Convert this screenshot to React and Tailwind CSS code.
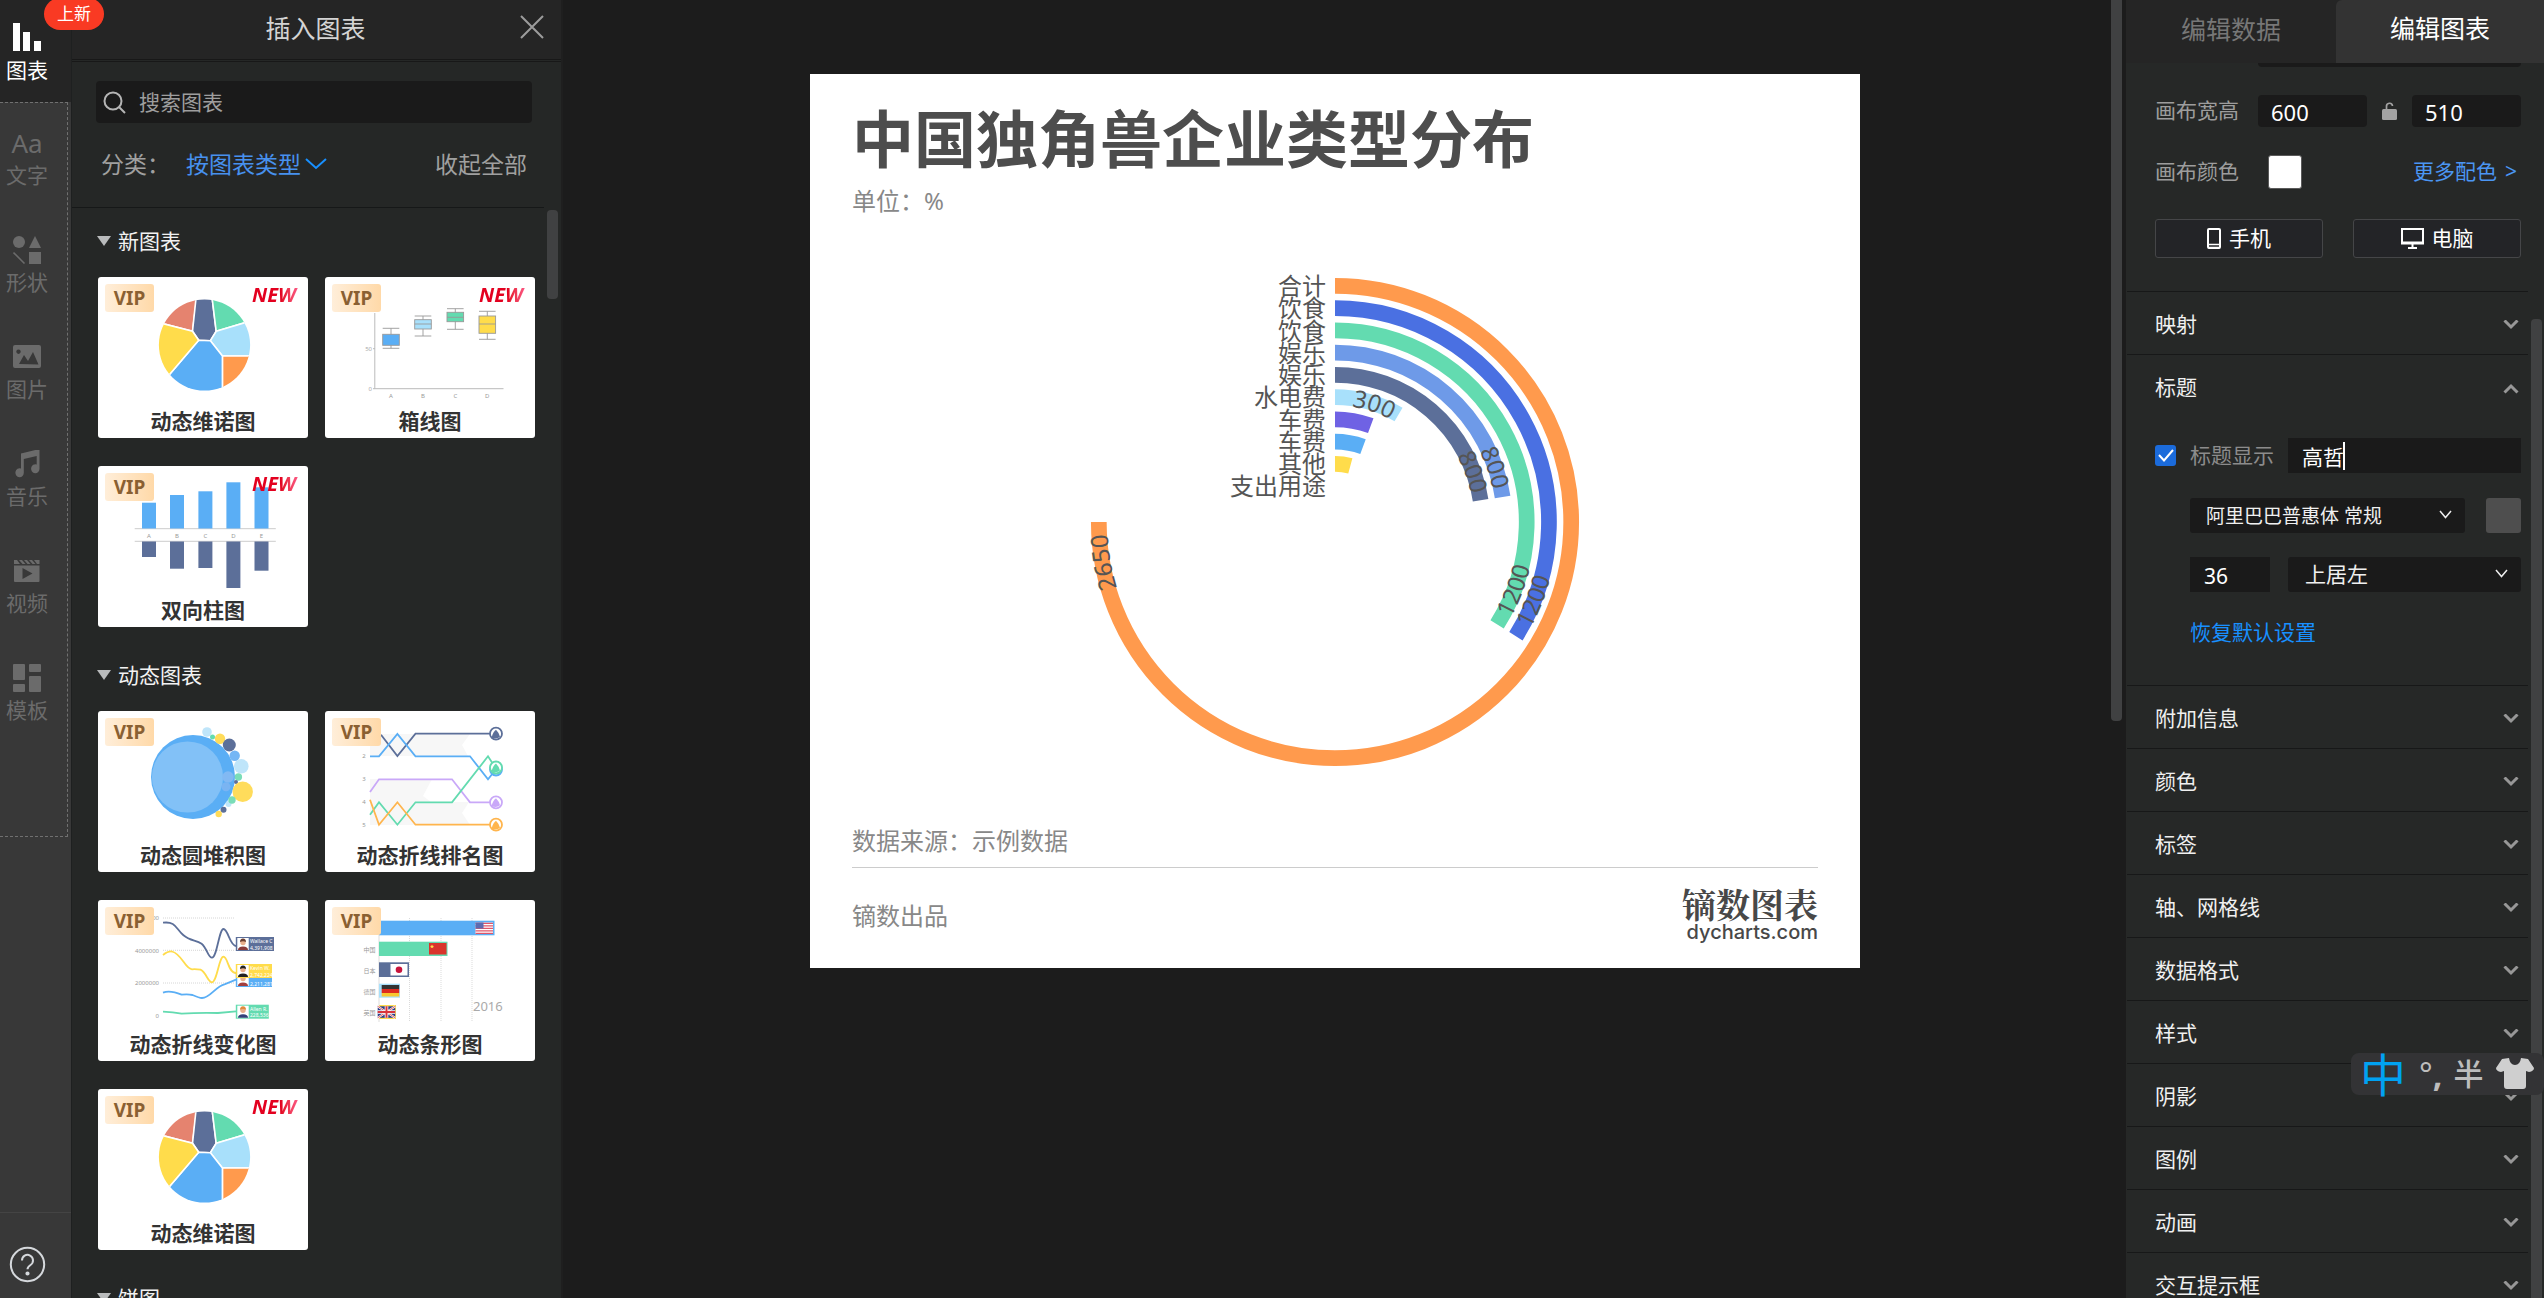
import React from 'react';

const RAIL = ['文字', '形状', '图片', '音乐', '视频', '模板'];

function RailIcon({ name }) {
  const p = { width: 28, height: 28, viewBox: '0 0 28 28', fill: 'currentColor', 'aria-hidden': true };
  switch (name) {
    case '图表':
      return (
        <svg {...p}>
          <rect x="0" y="0" width="7" height="28" />
          <rect x="10" y="9" width="7" height="19" />
          <rect x="21" y="18" width="7" height="10" />
        </svg>
      );
    case '形状':
      return (
        <svg {...p}>
          <circle cx="6" cy="6" r="6" />
          <path d="M22 0l6 12H16z" />
          <path d="M0.5 16.5l11 11" stroke="currentColor" strokeWidth="1.6" />
          <rect x="16" y="16" width="12" height="12" />
        </svg>
      );
    case '图片':
      return (
        <svg {...p}>
          <path
            fillRule="evenodd"
            d="M2 2h24a2 2 0 0 1 2 2v19a2 2 0 0 1-2 2H2a2 2 0 0 1-2-2V4a2 2 0 0 1 2-2zM5.500 6.500a2.200 2.200 0 1 0 .01 0zM6 21l5-9 4 6 5-9 5.500 12.500z"
          />
        </svg>
      );
    case '音乐':
      return (
        <svg {...p}>
          <path d="M8 3.500L26.500 -1v19.500a4.200 4.500 0 1 1-2.800-4V6L10.800 9v13.500a4.200 4.500 0 1 1-2.800-4z" />
        </svg>
      );
    case '视频':
      return (
        <svg {...p}>
          <path d="M1 3h3l3 4H1zM6 3h3l3.500 4h-3zM11 3h3l3.500 4h-3zM16 3h3l3.500 4h-3zM21 3h5.500v4H24z" />
          <path fillRule="evenodd" d="M1 8.500h25.500V24a1 1 0 0 1-1 1H2a1 1 0 0 1-1-1zM9.500 11v11l10-5.500z" />
        </svg>
      );
    case '模板':
      return (
        <svg {...p}>
          <rect x="0" y="0" width="12" height="16" rx="1" />
          <rect x="16" y="0" width="12" height="8" rx="1" />
          <rect x="0" y="20" width="12" height="8" rx="1" />
          <rect x="16" y="12" width="12" height="16" rx="1" />
        </svg>
      );
    default:
      return null;
  }
}

function Rail() {
  return (
    <nav className="relative flex w-[71px] shrink-0 flex-col bg-[#383838]">
      <button className="flex h-[102px] shrink-0 flex-col items-center gap-[6px] bg-[#252525] pt-[23px] pr-[17px] text-[21px] leading-[26px] text-white">
        <RailIcon name="图表" />
        <span>图表</span>
      </button>
      <div className="flex h-[735px] w-[68px] shrink-0 flex-col gap-12 border-y border-r border-dashed border-[#707070] pt-[26px] pr-[13px] text-[#6b6b6b]">
        {RAIL.map((n) => (
          <button key={n} className="flex flex-col items-center gap-[5px] text-[21px] leading-[26px]">
            {n === '文字' ? <span className="h-7 text-[26px] leading-7">Aa</span> : <RailIcon name={n} />}
            <span>{n}</span>
          </button>
        ))}
      </div>
      <div className="mt-auto flex h-[86px] shrink-0 items-center border-t border-[#444] pt-[18px] pl-[9px]">
        <button aria-label="帮助" className="text-[#d5d8dc]">
          <svg width="37" height="37" viewBox="0 0 37 37" fill="none" stroke="currentColor" strokeWidth="2">
            <circle cx="18.500" cy="18.500" r="16.700" />
            <path d="M13 14.500a5.500 5.500 0 1 1 8.500 4.500c-2 1.300-3 2-3 4.300" />
            <circle cx="18.500" cy="27.500" r="1.100" fill="currentColor" />
          </svg>
        </button>
      </div>
      <span className="absolute top-[-2px] left-[44px] z-10 flex h-8 w-[60px] items-center justify-center rounded-full bg-[#f93a23] text-[17px] text-white">
        上新
      </span>
    </nav>
  );
}

function Voronoi({ id }) {
  const cells = [
    ['#e5836f', '58,42.8 50,10 99,15 98.5,20.7 94.5,52.3'],
    ['#5c6f99', '99,10 113,10 118.2,52.3 112.4,61.7 100.7,61.3 94.500,52.3'],
    ['#63dbb0', '113,10 160,10 154,41.5 118.2,52.3'],
    ['#a8e0fb', '118.2,52.3 154,41.5 165,77 124.4,77 112.4,61.7'],
    ['#ff9a4d', '124.4,77 165,77 160,120 124.4,120'],
    ['#5aaef5', '112.4,61.7 124.4,77 124.4,125 60,125 60,109 100.7,61.3'],
    ['#ffdc4b', '94.5,52.3 100.7,61.3 60,109 45,90 45,39.500'],
  ];
  return (
    <>
      <clipPath id={id}>
        <circle cx="106.5" cy="66" r="45.6" />
      </clipPath>
      <g clipPath={`url(#${id})`} stroke="#fff" strokeWidth="1.6">
        {cells.map(([c, pts]) => (
          <polygon key={c} fill={c} points={pts} />
        ))}
      </g>
    </>
  );
}

function BoxPlot() {
  const boxes = [
    ['#5aaef5', 66, 49.3, 55.3, 61, 66.3, 69.3, 'A'],
    ['#a8e0fb', 98, 37, 40.7, 45, 50, 57, 'B'],
    ['#63dbb0', 130.3, 29.7, 33.3, 38.3, 42.7, 50.3, 'C'],
    ['#ffdc4b', 162.300, 32.3, 37, 45, 54.3, 60.3, 'D'],
  ];
  return (
    <>
      <path d="M49.8 34V109.7H178.5M48 69.7h2M48 109.7h2" stroke="#bbb" strokeWidth="1" fill="none" />
      <g fontSize="6" fill="#aaa" textAnchor="end">
        <text x="47" y="72">50</text>
        <text x="47" y="112">0</text>
      </g>
      {boxes.map(([c, x, t, q1, m, q3, b, l]) => (
        <g key={l} stroke="#999" strokeWidth="0.9">
          <path d={`M${x} ${t}V${b}M${x - 8.3} ${t}h16.6M${x - 8.3} ${b}h16.6`} />
          <rect x={x - 8.3} y={q1} width="16.6" height={q3 - q1} fill={c} />
          {l !== 'A' && <path d={`M${x - 8.3} ${m}h16.6`} />}
          <text x={x} y="119" fontSize="6" fill="#999" stroke="none" textAnchor="middle">{l}</text>
        </g>
      ))}
    </>
  );
}

function TwoWayBars() {
  const d = [
    ['A', 44, 34.7, 89],
    ['B', 72, 27, 100.7],
    ['C', 100.4, 23.3, 100],
    ['D', 128.4, 14.3, 120],
    ['E', 156.5, 19.3, 102.7],
  ];
  return (
    <>
      <path d="M36.7 60.7H177.8M36.7 73.3H177.8" stroke="#ccc" />
      {d.map(([l, x, t, b]) => (
        <g key={l}>
          <rect x={x} y={t} width="14" height={60.500 - t} fill="#5aaef5" />
          <rect x={x} y="73.500" width="14" height={b - 73.500} fill="#5c6f99" />
          <text x={x + 7} y="69.500" fontSize="6" fill="#999" textAnchor="middle">{l}</text>
        </g>
      ))}
    </>
  );
}

function Bubbles() {
  const d = [
    [95, 64, 42, '#5aaef5'], [89.5, 64, 35.6, '#82c1f7'], [109, 19, 4.8, '#bfe5fa'], [114.5, 24, 2.5, '#63dbb0'],
    [122, 25.7, 5.2, '#ffdc5b'], [131.3, 32, 6.5, '#5c6f99'], [136.7, 42.7, 5.2, '#74b6f5'], [143.3, 53.3, 7.3, '#bfe5fa'],
    [140.4, 64, 3.7, '#7addb8'], [138, 69, 2, '#5c6f99'], [130, 64, 5.8, '#82b9f3'], [128, 73.7, 4.5, '#7ab4f2'],
    [144.7, 78.7, 10.2, '#ffdc5b'], [130.500, 91, 3, '#bfe5fa'], [134, 87, 3.7, '#7addb8'], [125.5, 96.7, 3, '#5c6f99'],
    [120.7, 101, 3.2, '#ffdc5b'],
  ];
  return d.map(([x, y, r, c], i) => <circle key={i} cx={x} cy={y} r={r} fill={c} />);
}

function RankLines() {
  const lines = [
    ['#5c6f99', '56,21.7 72.4,43 90.5,20.7 165,20.7', 20.7],
    ['#5aaef5', '45,43.3 54,43.3 72.4,21 90.5,43.3 145,43.3 163,66.3 168,60', 56.5],
    ['#c9a8f8', '45,79 54,66.3 127,66.3 145,89.3 165,89.3', 89.3],
    ['#63dbb0', '45,101.7 54,89.3 72.4,111.7 90.5,89.3 127,89.3 163,43.3 168,51', 54.500],
    ['#ffb54d', '45,86.7 54,111.7 72.4,89.3 90.5,111.7 165,111.7', 111.7],
  ];
  return (
    <>
      <path d="M45 21h100l-8 11 6 11H45zM45 66h62l-9 17 8 6h38l-7 11 8 12H45z" fill="#f7f7f7" />
      {[2, 3, 4, 5].map((n) => (
        <text key={n} x="39" y={n * 22.800 - 0.5} fontSize="6" fill="#999" textAnchor="middle">{n}</text>
      ))}
      {lines.map(([c, pts, y]) => (
        <g key={c} stroke={c} strokeWidth="1.8" fill="none">
          <polyline points={pts} />
          <circle cx="171" cy={y} r="6" fill="#fff" />
          <path d={`M166.500 ${y + 4}q1.500-6 4.500-8q3 3 4 7q-3 3-8.500 1z`} fill={c} stroke="none" />
        </g>
      ))}
    </>
  );
}

function Tag({ y, w, h, color, name, value, shirt, hair }) {
  return (
    <g>
      <rect x="137.8" y={y} width={w} height={h} fill={color} />
      <rect x="139.3" y={y + 1} width="11.4" height={h - 2} fill="#fff" />
      <path d={`M140 ${y + h - 1}q0-3.500 5-3.500t5 3.500z`} fill={shirt} />
      <circle cx="145" cy={y + 5.500} r="2.700" fill="#e9b08d" />
      <path d={`M142 ${y + 5}q0-3.500 3-3.500t3 3.500q-3-1.500-6 0z`} fill={hair} />
      <text x="152" y={y + 6} fontSize="5" fill="#fff">{name}</text>
      <text x="152" y={y + h - 1.500} fontSize="5" fill="#fff">{value}</text>
    </g>
  );
}

function TrendLines() {
  return (
    <>
      <path d="M65 16H137M65 48.3H137M65 81H137" stroke="#ccc" strokeDasharray="1 1" strokeWidth="0.8" />
      <g fontSize="6" fill="#999" textAnchor="end">
        <text x="61" y="18">00</text>
        <text x="61" y="50.500">4000000</text>
        <text x="61" y="83">2000000</text>
        <text x="61" y="116">0</text>
      </g>
      <g fill="none" strokeWidth="1.8">
        <path stroke="#5c6f99" d="M65 20.700C78 19 78 27 85.500 33.300C92 39 98 38 103.600 41.700C109 46 110 55.700 114 55.700C119 55.700 121 27 125.500 27C130 27 132 44 138 44" />
        <path stroke="#ffdc4b" d="M65 53Q70 49 74 49.500C84 52 87 67 94 67.300Q98 67 102.500 67.700C108 70 110 80.300 114 80.300C119 80 121 54.700 125.500 54.700C130 55 130 71 138 71" />
        <path stroke="#5aaef5" d="M65 90.700Q72 88 83.600 92.700Q90 92 94.500 93C99 95 102 96 104 96C112 96 118 84 126.500 82.300L138 77.700" />
        <path stroke="#63dbb0" d="M65 109.700Q75 110 83.600 111.700Q100 110.500 120 111L138 109.300" />
      </g>
      <Tag y={35} w={38.2} h={14} color="#5c6f99" name="Wallace C" value="4,391,908" shirt="#8a3b3b" hair="#6b3d2e" />
      <Tag y={71} w={36.2} h={14} color="#5aaef5" name="" value="2,211,281" shirt="#a33f3f" hair="#7b3d2e" />
      <Tag y={62} w={36.2} h={14} color="#ffdc4b" name="Kevin W." value="2,742,224" shirt="#222" hair="#222" />
      <Tag y={102.7} w={33} h={14} color="#63dbb0" name="Allen R." value="228,536" shirt="#33407a" hair="#e08a3c" />
    </>
  );
}

function FlagBars() {
  return (
    <>
      <path d="M84.5 16V120M116 16V120M147 16V120" stroke="#ccc" strokeDasharray="1 1" strokeWidth="0.7" />
      <path d="M54 16V120" stroke="#ddd" />
      <rect x="54" y="18.700" width="115.5" height="14.600" fill="#5aaef5" />
      <rect x="54" y="39.700" width="68.500" height="14.300" fill="#63dbb0" />
      <rect x="54" y="60.300" width="30" height="14.700" fill="#5c6f99" />
      <rect x="54" y="81.700" width="21" height="14" fill="#a8e0fb" />
      <rect x="54" y="103" width="17" height="14" fill="#ffdc4b" />
      <g>
        <rect x="150.500" y="20.500" width="17.500" height="11.500" fill="#fff" />
        <path d="M150.500 21.400h17.500M150.500 23.900h17.500M150.500 26.400h17.500M150.500 28.900h17.500M150.500 31.400h17.500" stroke="#e0566a" strokeWidth="1.300" />
        <rect x="150.500" y="20.500" width="8" height="6" fill="#5d6bb0" />
      </g>
      <rect x="104" y="41" width="17.500" height="11.500" fill="#d9352c" />
      <path d="M107 42.500l.6 1.300 1.400.1-1 1 .3 1.400-1.300-.7-1.300.7.3-1.400-1-1 1.400-.1z" fill="#ffde4b" />
      <rect x="65.500" y="62" width="17" height="11.500" fill="#fff" />
      <circle cx="74" cy="67.700" r="3.300" fill="#c8143c" />
      <rect x="56.700" y="83" width="17.500" height="4" fill="#333" />
      <rect x="56.700" y="87" width="17.500" height="4" fill="#dd2b20" />
      <rect x="56.700" y="91" width="17.500" height="3.500" fill="#f8c830" />
      <g>
        <rect x="52.700" y="104.300" width="17.500" height="11.500" fill="#2c3f87" />
        <path d="M52.700 104.300l17.500 11.500M70.200 104.300l-17.500 11.500" stroke="#fff" strokeWidth="2" />
        <path d="M52.700 104.300l17.500 11.500M70.200 104.300l-17.500 11.500" stroke="#d9353c" strokeWidth="0.8" />
        <path d="M61.500 104.300v11.500M52.700 110h17.500" stroke="#fff" strokeWidth="3.600" />
        <path d="M61.500 104.300v11.500M52.700 110h17.500" stroke="#d9353c" strokeWidth="2" />
      </g>
      <g fontSize="6" fill="#999" textAnchor="end">
        <text x="50.500" y="49.500">中国</text>
        <text x="50.500" y="70.500">日本</text>
        <text x="50.500" y="91.500">德国</text>
        <text x="50.500" y="112.500">英国</text>
      </g>
      <text x="148" y="109" fontSize="13" fill="#aaa">2016</text>
    </>
  );
}

function Card({ title, isNew, children }) {
  return (
    <button className="relative h-[161px] w-[210px] overflow-hidden rounded-[3px] bg-white text-center">
      <svg className="block" width="210" height="127" viewBox="0 0 210 127" aria-hidden="true">
        {children}
      </svg>
      <span className="block text-[21px] leading-[31px] font-bold text-[#333]">{title}</span>
      <span className="absolute top-[7px] left-[7px] flex h-7 w-[49px] items-center justify-center rounded-[3px] bg-linear-to-r from-[#ffeed9] to-[#ffd9a8] text-[19px] font-bold text-[#8a6032]">
        VIP
      </span>
      {isNew && (
        <span className="absolute top-[6px] right-[8px] bg-linear-to-r from-[#e3001f] from-60% to-[#ff5c8d] bg-clip-text pr-1 text-[20px] leading-6 font-bold text-transparent italic">
          NEW
        </span>
      )}
    </button>
  );
}

function Group({ title, children }) {
  return (
    <section>
      <button className="flex items-center gap-[7px] text-[21px] leading-[30px] text-[#f2f2f2]">
        <svg width="14" height="10" viewBox="0 0 14 10" fill="#b9bbbc" aria-hidden="true">
          <path d="M0 0h14L7 10z" />
        </svg>
        {title}
      </button>
      {children && <div className="mt-[21px] flex flex-wrap gap-x-[17px] gap-y-7 pl-px">{children}</div>}
    </section>
  );
}

function Library() {
  return (
    <aside className="relative flex w-[492px] shrink-0 flex-col border-r-2 border-[#1f1f1f] border-l border-l-[#1e2020] bg-[#252726]">
      <header className="relative flex h-[59px] shrink-0 items-center justify-center bg-[#252525] pr-[2px] pb-[2px] text-[25px] text-[#d4d4d4]">
        <h2>插入图表</h2>
        <button aria-label="关闭" className="absolute top-[15px] right-[17px]">
          <svg width="24" height="24" viewBox="0 0 24 24" stroke="#9c9c9c" strokeWidth="2">
            <path d="M1 1l22 22M23 1L1 23" />
          </svg>
        </button>
      </header>
      <div className="h-[3px] shrink-0 border-y border-[#181818]" />
      <div className="mt-[19px] mr-[29px] ml-6 flex h-[42px] shrink-0 items-center gap-[13px] rounded bg-[#1a1a1a] pl-[7px]">
        <svg width="23" height="23" viewBox="0 0 23 23" fill="none" stroke="#b5b5b5" strokeWidth="2" aria-hidden="true">
          <circle cx="10" cy="10" r="8.500" />
          <path d="M16 16l6 6" />
        </svg>
        <input
          aria-label="搜索图表"
          placeholder="搜索图表"
          className="min-w-0 flex-1 bg-transparent pt-[2px] text-[21px] text-white outline-none placeholder:text-[#9e9e9e]"
        />
      </div>
      <div className="mr-[17px] flex h-[85px] shrink-0 items-center border-b border-[#161818] pr-[17px] pb-[2px] pl-[29px] text-[23px] text-[#a0a0a0]">
        <span className="w-[85px]">分类：</span>
        <button className="flex items-center gap-1 text-[#4791ee]">
          按图表类型
          <svg width="22" height="12" viewBox="0 0 22 12" fill="none" stroke="#1890ff" strokeWidth="2" aria-hidden="true">
            <path d="M1 1l10 9L21 1" />
          </svg>
        </button>
        <button className="ml-auto">收起全部</button>
      </div>
      <div className="flex min-h-0 flex-1 flex-col gap-[33px] overflow-hidden pt-[18px] pl-[25px]">
        <Group title="新图表">
          <Card title="动态维诺图" isNew><Voronoi id="voronoi-a" /></Card>
          <Card title="箱线图" isNew><BoxPlot /></Card>
          <Card title="双向柱图" isNew><TwoWayBars /></Card>
        </Group>
        <Group title="动态图表">
          <Card title="动态圆堆积图"><Bubbles /></Card>
          <Card title="动态折线排名图"><RankLines /></Card>
          <Card title="动态折线变化图"><TrendLines /></Card>
          <Card title="动态条形图"><FlagBars /></Card>
          <Card title="动态维诺图" isNew><Voronoi id="voronoi-b" /></Card>
        </Group>
        <Group title="饼图" />
      </div>
      <span className="absolute top-[210px] right-[3px] h-[89px] w-[11px] rounded bg-[#404142]" />
    </aside>
  );
}

// Bars: label, value, colour, whether the value is written, angle between value text and bar end
const BARS = [
  ['合计', 2650, '#ff9a4d', true, 3],
  ['饮食', 1200, '#4a70e2', true, 3.6],
  ['饮食', 1200, '#63dbb0', true, 3.6],
  ['娱乐', 800, '#6e9ae8', true, 3],
  ['娱乐', 800, '#5c6f99', true, 3],
  ['水电费', 300, '#a8e0fb', true, 2],
  ['车费', 200, '#6f62e4', false, 0],
  ['车费', 200, '#5aaef5', false, 0],
  ['其他', 150, '#ffdc4b', false, 0],
];
const CX = 483;
const CY = 262;
const polar = (r, deg) => {
  const a = ((deg - 90) * Math.PI) / 180;
  return `${CX + r * Math.cos(a)} ${CY + r * Math.sin(a)}`;
};
const arc = (r, a0, a1) =>
  `M${polar(r, a0)}A${r} ${r} 0 ${Math.abs(a1 - a0) > 180 ? 1 : 0} ${a1 > a0 ? 1 : 0} ${polar(r, a1)}`;

function RadialChart() {
  return (
    <svg className="block w-full" viewBox="0 0 966 520" role="img" aria-label="中国独角兽企业类型分布">
      {BARS.map(([, v, c], i) => (
        <path key={i} d={arc(236.2 - i * 22.25, 0, (v / 2650) * 270)} stroke={c} strokeWidth="15.700" fill="none" />
      ))}
      <g fontSize="24" fill="#555">
        {[...BARS.map((b) => b[0]), '支出用途'].map((t, i) => (
          <text key={i} x="474" y={35 + i * 22.25} textAnchor="end">{t}</text>
        ))}
        {BARS.map(([, v, , shown, gap], i) => {
          if (!shown) return null;
          const mid = 236.2 - i * 22.25;
          const end = (v / 2650) * 270 - gap;
          const flip = end > 90 && end < 180;
          const d = flip ? arc(mid + 8.500, end, end - 60) : arc(mid - 8.500, Math.max(end - 60, 0), end);
          return (
            <React.Fragment key={i}>
              <path id={`value-${i}`} d={d} fill="none" />
              <text textAnchor={flip ? 'start' : 'end'}>
                <textPath href={`#value-${i}`} startOffset={flip ? '0%' : '100%'}>{v}</textPath>
              </text>
            </React.Fragment>
          );
        })}
      </g>
    </svg>
  );
}

function Stage() {
  return (
    <main className="relative flex min-w-0 flex-1 items-start justify-center bg-[#1c1c1c] pt-[74px] pr-[19px]">
      <article className="flex w-[1050px] flex-col bg-white px-[42px] pt-[22px] pb-[24px] text-[24px] leading-9 text-[#888]">
        <h1 className="text-[62px] leading-[87px] font-bold text-[#4d4d4d]">中国独角兽企业类型分布</h1>
        <p>单位：%</p>
        <div className="mt-[41px]">
          <RadialChart />
        </div>
        <p className="mt-[43px] border-b border-[#ccc] pb-[8px]">数据来源：示例数据</p>
        <footer className="flex items-start justify-between pt-5">
          <span className="pt-[10px]">镝数出品</span>
          <span className="flex flex-col items-end text-[#484848]">
            <span className="font-['Noto_Serif_CJK_SC','Noto_Sans_CJK_SC',serif] text-[34px] leading-[32px] font-bold">镝数图表</span>
            <span className="font-['Inter',sans-serif] text-[20px] leading-6 font-medium">dycharts.com</span>
          </span>
        </footer>
      </article>
      <span className="absolute top-0 right-[4px] h-[721px] w-[11px] rounded-b bg-[#404142]" />
    </main>
  );
}

function Chevron({ up }) {
  return (
    <svg width="16" height="11" viewBox="0 0 16 11" fill="none" stroke="#979797" strokeWidth="3" aria-hidden="true">
      <path d={up ? 'M1.500 9.500L8 3l6.500 6.500' : 'M1.500 0.500L8 7l6.500-6.500'} />
    </svg>
  );
}

function Section({ title, open, children }) {
  return (
    <section className="mr-4 ml-px border-t border-[#171818]">
      <h3>
        <button aria-expanded={!!open} className="flex h-[62px] w-full items-center justify-between pt-1 pr-[9px] pl-7 text-[21px] text-[#f0f0f0]">
          {title}
          <Chevron up={open} />
        </button>
      </h3>
      {children}
    </section>
  );
}

function Select({ label, value, className, pad }) {
  return (
    <div className={`relative h-[35px] ${className}`}>
      <select
        aria-label={label}
        defaultValue={value}
        className={`h-full w-full appearance-none rounded-[3px] bg-[#1a1a1a] ${pad} text-[#f0f0f0] outline-none`}
      >
        <option>{value}</option>
      </select>
      <svg className="pointer-events-none absolute top-3 right-[13px]" width="13" height="9" viewBox="0 0 13 9" fill="none" stroke="#eee" strokeWidth="1.500" aria-hidden="true">
        <path d="M1 1l5.500 6.500L12 1" />
      </svg>
    </div>
  );
}

function Settings() {
  const field = 'h-8 w-[109px] rounded bg-[#1a1a1a] px-[13px] pt-[2px] text-[22px] text-white outline-none';
  const deviceBtn = 'flex h-[39px] w-[168px] items-center justify-center gap-2 rounded-[3px] border border-[#454648] bg-[#232427] text-[21px] text-white';
  return (
    <aside className="relative flex w-[418px] shrink-0 flex-col overflow-hidden bg-[#262827]">
      <div role="tablist" className="flex h-[63px] shrink-0 bg-[#252525] pb-1 text-[25px]">
        <button role="tab" aria-selected="false" className="w-[210px] text-[#777]">编辑数据</button>
        <button role="tab" aria-selected="true" className="-mb-1 flex-1 rounded-tl-md bg-[#333] pb-[6px] text-white">编辑图表</button>
      </div>
      <div className="min-h-0 flex-1 overflow-hidden">
        <div className="pr-[23px] pb-[33px] pl-[29px] text-[21px] text-[#9d9d9d]">
          <div className="ml-[103px] h-1 rounded-b bg-[#1a1a1a]" />
          <div className="mt-7 flex h-8 items-center">
            <label htmlFor="canvas-w" className="w-[103px]">画布宽高</label>
            <input id="canvas-w" defaultValue="600" className={field} />
            <button aria-label="锁定比例" className="mx-auto text-[#a3a3a3]">
              <svg width="15" height="18" viewBox="0 0 15 18" fill="currentColor">
                <rect x="0" y="7" width="15" height="11" rx="1.500" />
                <path d="M4.500 7V4.500a3 3 0 0 1 6-.5" fill="none" stroke="currentColor" strokeWidth="1.700" />
              </svg>
            </button>
            <input aria-label="画布高度" defaultValue="510" className={field} />
          </div>
          <div className="mt-7 flex h-[33px] items-center">
            <span className="w-[113px]">画布颜色</span>
            <button aria-label="画布颜色" className="size-[34px] rounded-[3px] border border-[#5a5a5a] bg-white" />
            <a href="#palette" className="ml-auto flex gap-2 pr-1 text-[#4b96f3]">
              更多配色 <span>&gt;</span>
            </a>
          </div>
          <div className="mt-[31px] flex justify-between">
            <button className={deviceBtn}>
              <svg width="14" height="21" viewBox="0 0 14 21" fill="none" stroke="#fff" strokeWidth="2" aria-hidden="true">
                <rect x="1" y="1" width="12" height="19" rx="1" />
                <path d="M1 16.500h12M1 19.500h12" strokeWidth="1.500" />
              </svg>
              手机
            </button>
            <button className={deviceBtn}>
              <svg width="23" height="21" viewBox="0 0 23 21" fill="none" stroke="#fff" strokeWidth="2" aria-hidden="true">
                <path d="M1 1h21v13.500H1z" />
                <path d="M0 15.500h23M11.500 15v5M7 20h9" />
              </svg>
              电脑
            </button>
          </div>
        </div>
        <Section title="映射" />
        <Section title="标题" open>
          <div className="flex flex-col pt-[21px] pr-[7px] pb-[40px] pl-7 text-[21px]">
            <div className="flex h-[35px] items-center">
              <input
                id="title-show"
                type="checkbox"
                defaultChecked
                className="peer size-[21px] appearance-none rounded-[3px] bg-[#1b6bdb]"
              />
              <svg className="pointer-events-none -ml-[18px]" width="16" height="13" viewBox="0 0 16 13" fill="none" stroke="#fff" strokeWidth="2" aria-hidden="true">
                <path d="M1 6l5 5.500L15 1" />
              </svg>
              <label htmlFor="title-show" className="ml-4 w-[98px] text-[#8c8c8c]">标题显示</label>
              <div className="relative h-full flex-1">
                <input aria-label="标题" defaultValue="高哲" className="h-full w-full bg-[#1a1a1a] px-[14px] text-white outline-none" />
                <span className="absolute top-1 left-[55px] h-7 w-[2px] bg-white" />
              </div>
            </div>
            <div className="mt-[25px] ml-[35px] flex justify-between">
              <Select label="字体" value="阿里巴巴普惠体 常规" className="w-[275px]" pad="px-4 pt-[2px] text-[19px]" />
              <button aria-label="标题颜色" className="size-[35px] rounded-[3px] bg-[#4e4e4e]" />
            </div>
            <div className="mt-6 ml-[35px] flex justify-between">
              <input aria-label="字号" defaultValue="36" className="h-[35px] w-20 bg-[#1a1a1a] px-[14px] pt-[2px] text-white outline-none" />
              <Select label="位置" value="上居左" className="w-[233px]" pad="px-[17px]" />
            </div>
            <a href="#reset" className="mt-[27px] ml-[35px] leading-[26px] text-[#1890ff]">恢复默认设置</a>
          </div>
        </Section>
        {['附加信息', '颜色', '标签', '轴、网格线', '数据格式', '样式', '阴影', '图例', '动画', '交互提示框'].map((t) => (
          <Section key={t} title={t} />
        ))}
      </div>
      <span className="absolute top-[319px] right-[2px] bottom-0 w-[11px] rounded-t bg-[#404142]" />
      <div className="absolute right-0 bottom-[203px] flex h-[42px] w-[193px] items-center rounded-lg bg-[#333335] pl-2 leading-[42px] text-[#bdbdbd]">
        <span className="w-[48px] text-center text-[46px] font-normal text-[#00a2f2]">中</span>
        <span className="ml-3 text-[32px]">°</span>
        <span className="text-[34px] font-bold">,</span>
        <span className="ml-[11px] text-[30px] font-medium">半</span>
        <svg className="ml-auto mr-[10px]" width="38" height="32" viewBox="0 0 38 32" fill="#cfcfcf" aria-hidden="true">
          <path d="M6 1l7-1q1 7 6 7t6-7l7 1 6 9q0 3-5 4l-3-1v15q0 3-3 3H11q-3 0-3-3V13l-3 1q-5-1-5-4z" />
        </svg>
      </div>
    </aside>
  );
}

export default function App() {
  return (
    <div className="flex h-screen overflow-hidden bg-[#1c1c1c] font-['Noto_Sans','Noto_Sans_CJK_SC',sans-serif] leading-normal">
      <Rail />
      <Library />
      <Stage />
      <Settings />
    </div>
  );
}
